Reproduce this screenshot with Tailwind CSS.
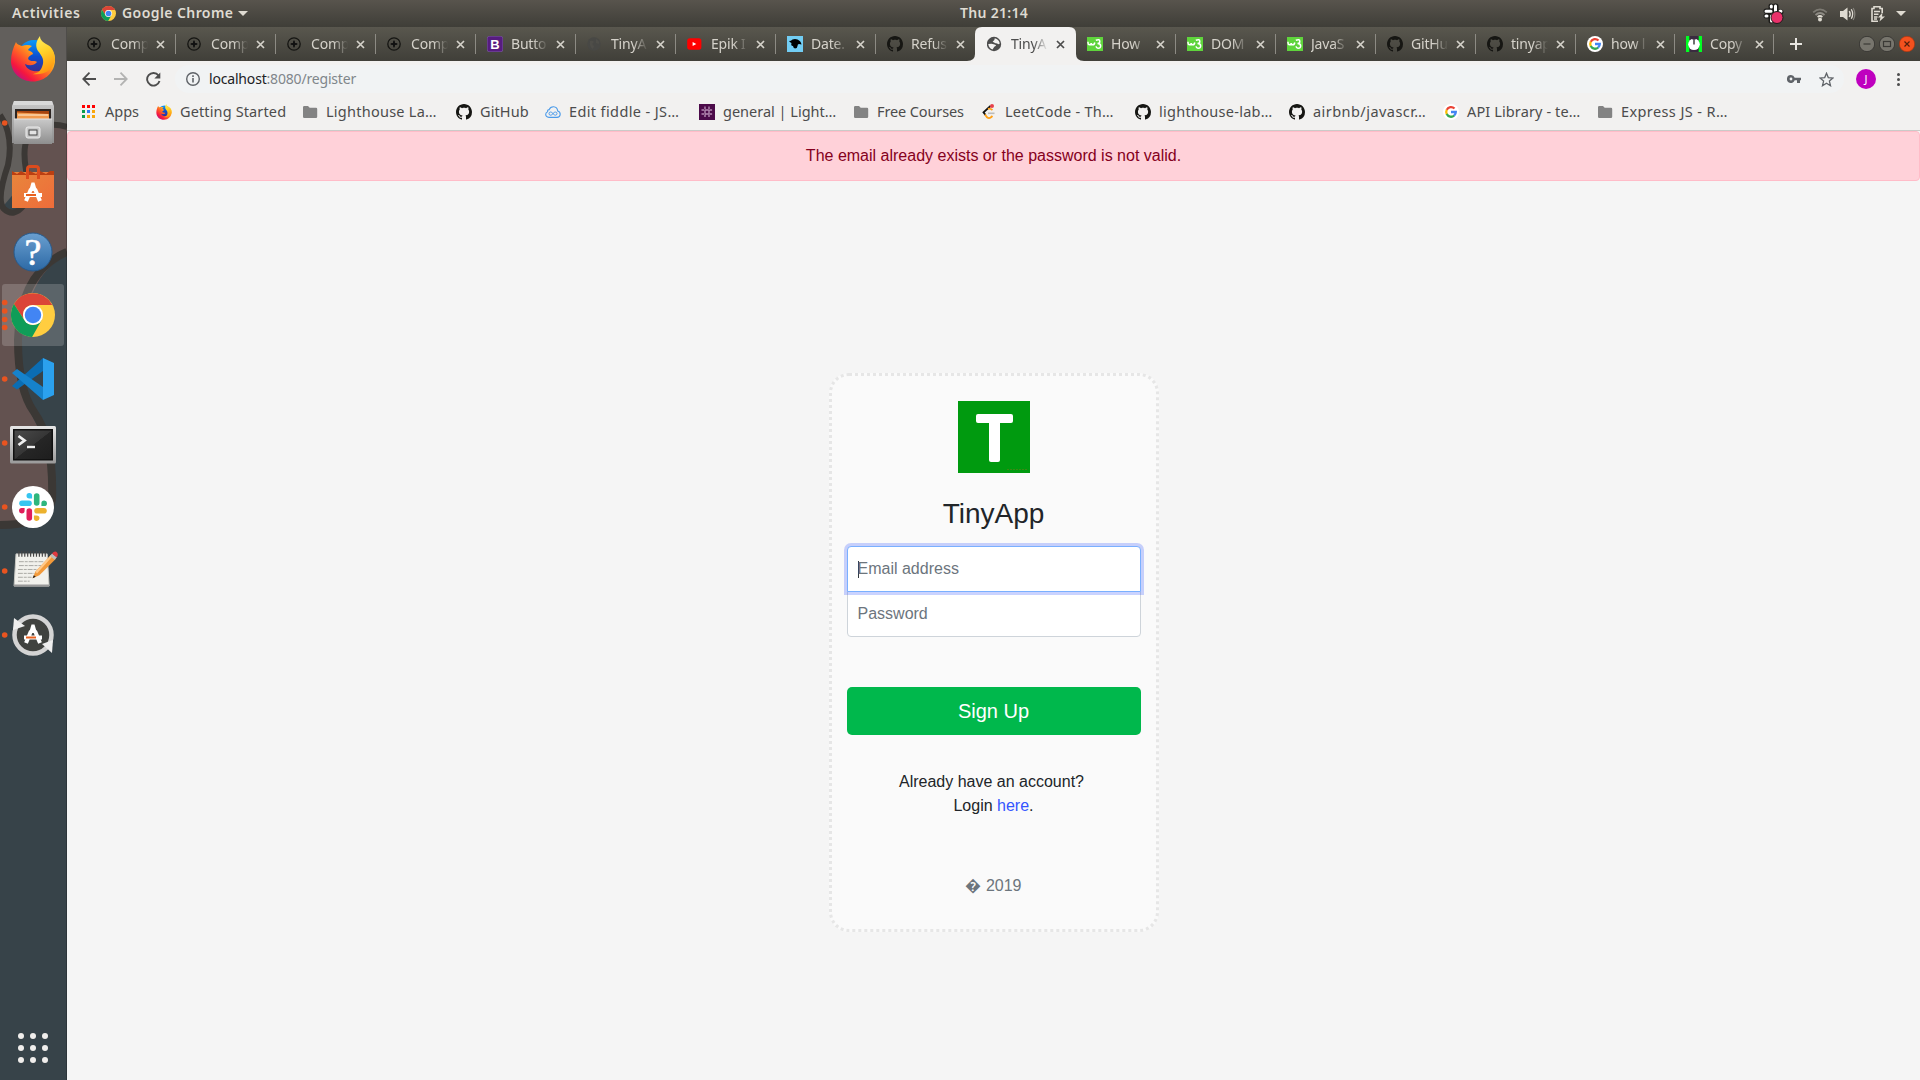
<!DOCTYPE html>
<html lang="en">
<head>
<meta charset="utf-8">
<title>TinyApp</title>
<script src="https://cdn.jsdelivr.net/npm/@tailwindcss/browser@4"></script>
</head>
<body class="w-[1920px] h-[1080px] overflow-hidden flex flex-col bg-[#f5f5f5] font-['Noto_Sans',sans-serif]">

<!-- shared icon definitions -->
<svg class="absolute w-0 h-0">
  <defs>
    <linearGradient id="ffBody" x1="0.85" y1="0.1" x2="0.1" y2="0.9"><stop offset="0" stop-color="#fff44f"/><stop offset=".3" stop-color="#ffa51e"/><stop offset=".55" stop-color="#ff5a28"/><stop offset=".8" stop-color="#f5173f"/><stop offset="1" stop-color="#b5108c"/></linearGradient>
    <linearGradient id="ffTail" x1="0" y1="0" x2="0.3" y2="1"><stop offset="0" stop-color="#fff36b"/><stop offset=".5" stop-color="#ffd32a"/><stop offset="1" stop-color="#ff9a12"/></linearGradient>
    <linearGradient id="ffGlobe" x1="0.5" y1="0" x2="0.5" y2="1"><stop offset="0" stop-color="#0a9bfa"/><stop offset=".5" stop-color="#0b4fd0"/><stop offset="1" stop-color="#3c2a8c"/></linearGradient>
    <linearGradient id="steel" x1="0" y1="0" x2="0" y2="1"><stop offset="0" stop-color="#c9c9c9"/><stop offset="1" stop-color="#8e8e8e"/></linearGradient>
    <linearGradient id="bag" x1="0" y1="0" x2="1" y2="1"><stop offset="0" stop-color="#e8863c"/><stop offset="1" stop-color="#ef6c3a"/></linearGradient>
    <linearGradient id="help" x1="0" y1="0" x2="0" y2="1"><stop offset="0" stop-color="#6a9fd0"/><stop offset="1" stop-color="#2c69a5"/></linearGradient>
    <linearGradient id="termFrame" x1="0" y1="0" x2="0" y2="1"><stop offset="0" stop-color="#e6e6e6"/><stop offset="1" stop-color="#9a9a9a"/></linearGradient>
    <linearGradient id="screen" x1="0" y1="0" x2="1" y2="1"><stop offset="0" stop-color="#4a4a4a"/><stop offset=".5" stop-color="#363636"/><stop offset=".51" stop-color="#262626"/><stop offset="1" stop-color="#1e1e1e"/></linearGradient>

    <symbol id="firefox" viewBox="0 0 44 46">
      <circle cx="23" cy="20.500" r="16.500" fill="url(#ffGlobe)"/>
      <path d="M5 6C2 12 0 18 0 25C0 37 10 45.500 22 45.500S44 36 44 24C44 20 43 17 41 14C42 22 38 33 29 35C22 36.500 15 33 14 28C18 30 23 30 26 26C24 24 21 26 18 24C16 22 18 20 22 18C22 16 19 15 17 14C18 12 20 11 21 10C18 8.500 14 8.500 11 10C9 9 6 9 5 6Z" fill="url(#ffBody)"/>
      <path d="M29 0C25 5 24 10 27 15C31 20 34 24 31 31C29 36 25 38 21 38C33 40 43 33 44 24C44 15 40 10 35 8C32 6 29 4 29 0Z" fill="url(#ffTail)"/>
    </symbol>
    <symbol id="chrome" viewBox="0 0 48 48">
      <circle cx="24" cy="24" r="24" fill="#ffcd40"/>
      <path d="M3.200 12A24 24 0 0 1 45 13H24A11 11 0 0 0 14.500 29.500Z" fill="#db4437"/>
      <path d="M3.200 12L14.500 29.500A11 11 0 0 0 33.500 29.500L23 48A24 24 0 0 1 3.200 12Z" fill="#0f9d58"/>
      <circle cx="24" cy="24" r="11" fill="#fff"/><circle cx="24" cy="24" r="9" fill="#4285f4"/>
    </symbol>
    <symbol id="github" viewBox="0 0 16 16"><path fill-rule="evenodd" d="M8 0C3.580 0 0 3.580 0 8c0 3.540 2.290 6.530 5.470 7.590.4.070.55-.17.55-.38 0-.19-.01-.82-.01-1.490-2.010.37-2.530-.49-2.690-.94-.09-.23-.48-.94-.82-1.130-.28-.15-.68-.52-.01-.53.63-.01 1.080.58 1.230.82.72 1.210 1.870.87 2.330.66.070-.52.28-.87.51-1.070-1.780-.2-3.640-.89-3.640-3.950 0-.87.31-1.590.82-2.150-.08-.2-.36-1.020.08-2.120 0 0 .67-.21 2.200.82.64-.18 1.320-.27 2-.27s1.360.09 2 .27c1.530-1.040 2.200-.82 2.200-.82.44 1.100.16 1.920.08 2.120.51.56.82 1.270.82 2.150 0 3.070-1.870 3.750-3.650 3.950.29.25.54.73.54 1.480 0 1.070-.01 1.930-.01 2.200 0 .21.15.46.55.38A8.010 8.010 0 0 0 16 8c0-4.420-3.580-8-8-8z"/></symbol>
    <symbol id="compass" viewBox="0 0 16 16"><circle cx="7" cy="8" r="6.200" fill="none" stroke="#151512" stroke-width="1.300"/><path d="M7 4.300L8.100 6.900L10.700 8L8.100 9.100L7 11.700L5.900 9.100L3.300 8L5.900 6.900Z" fill="#111"/><path d="M7 4.800V11.200M3.800 8H10.200" stroke="#111" stroke-width="1.300"/></symbol>
    <symbol id="bootstrap" viewBox="0 0 16 16"><rect width="16" height="16" rx="2.500" fill="#7a5aa0"/><rect x=".5" y=".5" width="15" height="15" rx="2" fill="#571c80"/><text x="8" y="12.600" text-anchor="middle" font-family="Liberation Sans" font-weight="bold" font-size="13" fill="#fff">B</text></symbol>
    <symbol id="dimglobe" viewBox="0 0 16 16"><circle cx="7" cy="8" r="6.800" fill="#484845"/><path d="M3 5Q6 4 7 6Q4 8 7 10L6 13Q2 11 3 5ZM9 3Q13 5 12 8L9 7Z" fill="#4f4e49"/></symbol>
    <symbol id="globe" viewBox="0 0 16 16"><circle cx="7" cy="8" r="7.200" fill="#4d4d4d"/><path d="M1.300 8L4.500 7.800Q6.800 8.300 8.300 8.800L9.100 9.700Q7.300 10.300 6.800 11.500L5.600 13.500Q1.800 12.300 1.300 8ZM7.800 2.300Q11.800 3.300 12.800 7.500L11.300 8.300Q10.100 7 8.500 7.200L5.600 5.700Q7.800 5 7.800 2.300Z" fill="#f2f1f0"/></symbol>
    <symbol id="youtube" viewBox="0 0 16 16"><rect x=".2" y="2.300" width="14.200" height="11.400" rx="2.600" fill="#f00"/><path d="M5.600 6V10L9.300 8Z" fill="#fff"/></symbol>
    <symbol id="bird" viewBox="0 0 16 16"><rect width="16" height="16" fill="#72cdf4"/><path d="M2 5Q4 5 5.500 3.500Q8 2.600 10.500 3.500Q14 5 14.500 8.500L12 8Q10.500 8 10.500 10Q10.300 12.500 8 12.500Q6.300 12 6 10Q3.500 10 4.500 7Q3 6.500 2 5Z" fill="#000"/></symbol>
    <symbol id="w3" viewBox="0 0 16 16"><rect y="1" width="16" height="14" fill="#5fd43c"/><path d="M1 5.800V7Q1 8.800 2.600 8.800Q4.200 8.800 4.200 7Q4.200 8.800 5.800 8.800Q7.400 8.800 7.800 6.500M8.800 4.300Q12.800 2.800 12.800 5.400Q12.800 7.600 10.500 7.600Q13.700 7.600 13.700 10Q13.500 12.700 10.400 12Q9.200 11.600 9.100 10.300" fill="none" stroke="#fff" stroke-width="1.500"/></symbol>
    <symbol id="google" viewBox="0 0 16 16"><circle cx="8" cy="8" r="8" fill="#fff"/><g fill="none" stroke-width="2.300"><path d="M11.500 4.500A4.800 4.800 0 0 0 3.700 5.900" stroke="#ea4335"/><path d="M3.800 5.700A4.800 4.800 0 0 0 3.800 10.300" stroke="#fbbc05"/><path d="M3.700 10.100A4.800 4.800 0 0 0 11.200 11.500" stroke="#34a853"/><path d="M8 8H12.800A4.800 4.800 0 0 1 11.100 11.600" stroke="#4285f4"/></g></symbol>
    <symbol id="ccopy" viewBox="0 0 16 16"><rect width="16" height="16" fill="#0f2"/><rect x="3.300" width="9.400" height="16" fill="#3a2b40"/><circle cx="8" cy="8.300" r="5.800" fill="#fff"/><path d="M8 4V8.500" stroke="#222" stroke-width="1.300"/><path d="M5.500 3L8 4L10.500 3V1H5.500Z" fill="#3a2b40"/></symbol>
    <symbol id="apps" viewBox="0 0 16 16"><g fill="#f00"><path d="M1 1h3v3H1zM6 1h3v3H6zM11 1h3v3h-3z"/></g><path d="M1 6h3v3H1zM1 11h3v3H1z" fill="#0a9d4c"/><path d="M6 6h3v3H6z" fill="#2f7bf5"/><path d="M11 6h3v3h-3zM6 11h3v3H6zM11 11h3v3h-3z" fill="#f9a60a"/></symbol>
    <symbol id="folder" viewBox="0 0 16 16"><path d="M1 3.300Q1 2 2.200 2H6L7.700 3.700H14Q15.200 3.700 15.200 5V12.700Q15.200 14 14 14H2.200Q1 14 1 12.700Z" fill="#838383"/></symbol>
    <symbol id="fiddle" viewBox="0 0 16 16"><path d="M4 13.400Q.7 13.200.7 10.300Q.8 8.300 2.600 7.700Q2.300 5.700 4.200 5.600Q5.300 2.600 8.600 2.700Q12.300 3 12.700 7Q15.300 7.800 15.200 10.500Q14.900 13.300 12 13.400Z" fill="none" stroke="#4b9bea" stroke-width="1.100"/><path d="M8 9.600Q6.700 8 5.600 8Q4 8.100 4 9.600T5.600 11.200Q6.700 11.200 8 9.600Q9.300 8 10.400 8Q12 8.100 12 9.600T10.400 11.200Q9.300 11.200 8 9.600Z" fill="none" stroke="#4b9bea"/></symbol>
    <symbol id="slackbm" viewBox="0 0 16 16"><rect width="16" height="16" fill="#4c0b4a"/><path d="M6 2.500V13.500M10 2.500V13.500M2.500 6H13.500M2.500 10H13.500" stroke="#b48ab2" stroke-width="1.400" stroke-dasharray="2.500 .8 4 .8"/></symbol>
    <symbol id="leet" viewBox="0 0 16 16"><path d="M9.500 2L2.500 8.300L4.500 11" fill="none" stroke="#111" stroke-width="1.800"/><path d="M4 10.500L6 13.300Q8 15 10 13.300L11.500 12M7 4.800Q9 4 11.500 6" fill="none" stroke="#ffa116" stroke-width="1.800"/><path d="M7 9.300H13.500" stroke="#bbb" stroke-width="1.600"/><circle cx="11" cy="2" r="2" fill="#e8414a"/></symbol>
    <symbol id="slack" viewBox="0 0 28 28">
      <g stroke-width="5.600" stroke-linecap="round"><path d="M3 10.300H10" stroke="#36c5f0"/><path d="M17.700 3V10" stroke="#2eb67d"/><path d="M18 17.700H25" stroke="#ecb22e"/><path d="M10.300 18V25" stroke="#e01e5a"/></g>
      <path d="M13.100 5.600V2.900A2.800 2.800 0 1 0 10.300 5.600Z" fill="#36c5f0"/><path d="M22.400 13.100H25A2.800 2.800 0 1 0 22.400 10.300Z" fill="#2eb67d"/><path d="M14.900 22.400V25A2.800 2.800 0 1 0 17.700 22.400Z" fill="#ecb22e"/><path d="M5.600 14.900H3A2.800 2.800 0 1 0 5.600 17.700Z" fill="#e01e5a"/>
    </symbol>
  </defs>
</svg>

<!-- desktop top bar -->
<header class="h-[27px] shrink-0 flex items-center bg-linear-to-b from-[#58544d] to-[#3f3e38] text-[#dfdbd2] text-[14px] font-semibold leading-[25px]">
  <span class="w-[88px] h-[27px] pl-3 tracking-[0.6px]">Activities</span>
  <svg class="w-[15px] h-[15px] ml-[13px] mb-px"><use href="#chrome"/></svg>
  <span class="ml-1.5 w-[116px] h-[27px] whitespace-nowrap tracking-[0.42px]">Google Chrome</span>
  <svg class="w-[10px] h-[5px]" viewBox="0 0 10 5"><path d="M0 0H10L5 5Z" fill="#dfdbd2"/></svg>
  <span class="ml-[712px] w-[74px] h-[27px] whitespace-nowrap tracking-[0.3px]">Thu 21:14</span>
  <div class="ml-auto flex items-center pr-[14px]">
    <svg class="w-[22px] h-[22px] mr-[27px]" viewBox="0 0 22 22"><g stroke-linecap="round"><path d="M8 3V8M13 3V8M3 8H7M13 9H18M3 13H8M8 14V18M12 3V7" stroke="#1d1c1a" stroke-width="5"/><path d="M8.300 3V4M12.500 3V8M3 8.300H8M17 8.300H18M3 13H4M8.500 13V18M13 13H16" stroke="#fff" stroke-width="3"/></g><circle cx="14" cy="14.500" r="6" fill="#e9316a" stroke="#1d1c1a"/></svg>
    <svg class="w-4 h-4 mr-3" viewBox="0 0 16 16" fill="none" stroke-width="1.700"><path d="M1.200 6.300Q8 .3 14.800 6.300" stroke="#7d7a73"/><path d="M3.500 9Q8 5 12.500 9" stroke="#8f8c85"/><path d="M5.600 11Q8 9 10.400 11" stroke="#dfdbd2"/><circle cx="8" cy="13.400" r="2" fill="#dfdbd2"/></svg>
    <svg class="w-4 h-4 mr-[14px]" viewBox="0 0 16 16" fill="none"><path d="M0 5H3L7.500 1.500V14.500L3 11H0Z" fill="#dfdbd2"/><path d="M9.300 5Q11 8 9.300 11" stroke="#dfdbd2" stroke-width="1.500"/><path d="M11.300 3.300Q14 8 11.300 12.700" stroke="#dfdbd2" stroke-width="1.300"/><path d="M13.200 2Q16.500 8 13.200 14" stroke="#86837c" stroke-width="1.200"/></svg>
    <svg class="w-4 h-4 mr-[10px]" viewBox="0 0 16 16" fill="none" stroke="#dfdbd2"><path d="M8 15.200H2V2.500H4V.8H10V2.500H12.200V7" stroke-width="1.600"/><path d="M4 5.500H10M4 8.200H8.500M4 11H7.500M4 13H7" stroke-width="1.500"/><path d="M12.500 6.500L8 11.500H10.500L9.500 15.500L15 10.500H12Z" fill="#dfdbd2" stroke="none"/></svg>
    <svg class="w-[10px] h-[5px]" viewBox="0 0 10 5"><path d="M0 0H10L5 5Z" fill="#dfdbd2"/></svg>
  </div>
</header>

<div class="flex flex-1 min-h-0">
  <!-- launcher -->
  <aside class="relative w-[67px] h-[1053px] shrink-0 bg-[#374349] overflow-hidden">
    <svg class="absolute inset-0 w-[67px] h-[1053px]" viewBox="0 27 67 1053">
      <path d="M0 27H67V130L0 210Z" fill="#625f5c"/>
      <path d="M0 200Q10 222 25 200L24 145Q40 124 67 128V256Q30 270 21 340Q20 390 34 420Q52 450 50 500Q45 522 0 524Z" fill="#635250"/>
      <path d="M0 115Q14 135 8 165Q-4 200 4 209Q14 218 24 205Q33 190 26 170Q20 135 38 128Q52 122 67 127" fill="none" stroke="#3b3835" stroke-width="6"/>
      <path d="M67 252Q20 272 18 340Q18 390 34 412Q54 440 52 500Q46 525 0 525" fill="none" stroke="#3b3835" stroke-width="8"/>
      <path d="M66.500 27V1080" stroke="#000" stroke-opacity=".2"/>
    </svg>
    <nav class="relative flex flex-col h-full">
      <div class="h-16 flex items-center justify-center pr-px"><svg class="w-[44px] h-[46px]"><use href="#firefox"/></svg></div>
      <div class="h-16 flex items-center justify-center pr-px"><svg class="w-[42px] h-11" viewBox="0 0 42 44"><path d="M2 0H40L42 5V42H0V5Z" fill="url(#steel)"/><path d="M2 0H40L41 4H1Z" fill="#d9d9d9"/><path d="M3 8H39V18H3Z" fill="#2c2522"/><path d="M5 10H37V18H5Z" fill="#a8440e"/><path d="M5 11.500L37 13V18H5Z" fill="#f19a4e"/><path d="M6 14H36" stroke="#fff0d8"/><path d="M2 18H40V43H2Z" fill="url(#steel)"/><path d="M2 18H40" stroke="#e2e2e2"/><rect x="14" y="26" width="14" height="11" rx="2" fill="#c9c9c9" stroke="#ececec"/><rect x="17" y="29" width="8" height="5" fill="#e3e3e3" stroke="#444"/></svg></div>
      <div class="h-16 flex items-center justify-center pr-px"><svg class="w-[42px] h-[44px]" viewBox="0 0 42 44"><path d="M0 7H42V43H0Z" fill="url(#bag)"/><path d="M0 6L5 9L9 6L14 9L18 6L24 9L28 6L34 9L38 6L42 6V10H0Z" fill="#bb3f12"/><path d="M15.500 14V4Q15.500 1.500 18 1.500H24Q26.500 1.500 26.500 4V14" fill="none" stroke="#dc4b1d" stroke-width="3"/><path d="M14 36L19 24M28 36L23 24M12 30H30" fill="none" stroke="#fff" stroke-width="4"/><path d="M17 26L19.500 17.500H22.500L25 26Z" fill="#fff"/><path d="M14 30H24" stroke="#e8601f" stroke-width="2"/></svg></div>
      <div class="h-16 flex items-center justify-center pr-px pt-0.5"><svg class="w-10 h-10" viewBox="0 0 40 40"><circle cx="20" cy="20" r="19" fill="url(#help)" stroke="#275a8c"/><text x="20" y="32.500" text-anchor="middle" font-family="Liberation Serif" font-size="38" fill="#fff" stroke="#fff" stroke-width=".6">?</text></svg></div>
      <div class="h-16 flex items-center justify-center pr-px"><div class="w-[62px] h-[62px] rounded-[3px] bg-white/18 flex items-center justify-center"><svg class="w-11 h-11"><use href="#chrome"/></svg></div></div>
      <div class="h-16 flex items-center justify-center pr-px"><svg class="w-[42px] h-[42px]" viewBox="0 0 42 42"><path d="M0 28L31 0V13L5 31.500Z" fill="#0b6db3"/><path d="M0 15L5 11L31 29V42Z" fill="#1682cb"/><path d="M31 0L42 5V37L31 42Z" fill="#2ba1ee"/></svg></div>
      <div class="h-16 flex items-center justify-center pr-px pt-1"><svg class="w-[46px] h-[38px]" viewBox="0 0 46 38"><rect width="46" height="37.500" rx="1.500" fill="url(#termFrame)"/><rect x="3" y="3" width="40" height="31.500" fill="#111"/><rect x="4.500" y="4.500" width="37" height="28.500" fill="url(#screen)"/><path d="M8.500 10L14.500 14.500L8.500 19" fill="none" stroke="#eee" stroke-width="2.800"/><path d="M17 21H25" stroke="#eee" stroke-width="2.400"/></svg></div>
      <div class="h-16 flex items-center justify-center pr-px"><div class="w-[42px] h-[42px] rounded-full bg-white flex items-center justify-center"><svg class="w-7 h-7"><use href="#slack"/></svg></div></div>
      <div class="h-16 flex items-center justify-center pl-[3px] pb-[5px]"><svg class="w-[45px] h-[39px]" viewBox="0 0 46 40"><path d="M3 5H35L37 38H1Z" fill="#f1f1ec" stroke="#c9c9c3"/><path d="M1 37.500H37" stroke="#999" stroke-width="2"/><path d="M6 13H32M6 17H30M5 21H28M5 25H22M5 29H19M5 33H17" stroke="#a9a9a4" stroke-dasharray="5 1 3 1"/><path d="M6 2V8M9 2V8M12 2V8M15 2V8M18 2V8M21 2V8M24 2V8M27 2V8M30 2V8M33 2V8" stroke="#444" stroke-width="1.200"/><path d="M20 30L23 23L39 6L44 10L27 27Z" fill="#f29a3a"/><path d="M23 23L39 6L40.500 7.500L24.500 25Z" fill="#ffc98a"/><path d="M38 7L40 4.500L45 8.500L42.500 11Z" fill="#bdbdbd"/><path d="M40 4.500Q43 1 45.500 4Q46.500 7 44.500 8.500Z" fill="#e2393f"/><path d="M20 30L21.300 26.800L23.300 28.500Z" fill="#222"/></svg></div>
      <div class="h-16 flex items-center justify-center pr-px"><svg class="w-[42px] h-[42px]" viewBox="0 0 42 42"><circle cx="21" cy="21" r="18.500" fill="#40423f" stroke="#d4d4d4" stroke-width="4.500"/><path d="M2 4L13 12L1 16Z" fill="#eee"/><path d="M41 26L30 30L40 39Z" fill="#eee"/><path d="M14 29L19 17M28 29L23 17M12 23.500H30" fill="none" stroke="#fff" stroke-width="4"/><path d="M17 19L19.500 10.500H22.500L25 19Z" fill="#fff"/><path d="M14 23.500H24" stroke="#e8601f" stroke-width="2"/></svg></div>
      <div class="mt-auto h-16 flex items-center justify-center pr-px"><svg class="w-[30px] h-[30px]" viewBox="0 0 30 30" fill="#f0eeec"><circle cx="3" cy="3" r="3"/><circle cx="15" cy="3" r="3"/><circle cx="27" cy="3" r="3"/><circle cx="3" cy="15" r="3"/><circle cx="15" cy="15" r="3"/><circle cx="27" cy="15" r="3"/><circle cx="3" cy="27" r="3"/><circle cx="15" cy="27" r="3"/><circle cx="27" cy="27" r="3"/></svg></div>
    </nav>
    <!-- running-window markers -->
    <svg class="absolute inset-0 w-[67px] h-[1053px]" viewBox="0 27 67 1053" fill="#e95420"><circle cx="4.700" cy="123" r="2.800"/><circle cx="4.700" cy="302.500" r="2.800"/><circle cx="4.700" cy="311" r="2.800"/><circle cx="4.700" cy="319.500" r="2.800"/><circle cx="4.700" cy="327.500" r="2.800"/><circle cx="4.700" cy="379" r="2.800"/><circle cx="4.700" cy="443" r="2.800"/><circle cx="4.700" cy="507" r="2.800"/><circle cx="4.700" cy="571" r="2.800"/><circle cx="4.700" cy="635" r="2.800"/></svg>
  </aside>

  <section class="flex flex-col flex-1 min-w-0">
    <!-- tab strip -->
    <div class="h-[34px] shrink-0 flex bg-linear-to-b from-[#59574e] to-[#403f39] pl-[9px]">
      <div id="tabs" class="flex"></div>
      <svg class="w-3 h-3 mt-[11px] ml-4" viewBox="0 0 12 12"><path d="M6 0V12M0 6H12" stroke="#e8e6e1" stroke-width="2"/></svg>
      <div class="ml-auto mr-[5px] mt-[9px] flex gap-1">
        <svg class="w-4 h-4" viewBox="0 0 16 16"><circle cx="8" cy="8" r="7.700" fill="#77756d" stroke="#3a3935"/><path d="M4.500 8H11.500" stroke="#3a3935" stroke-width="1.200"/></svg>
        <svg class="w-4 h-4" viewBox="0 0 16 16"><circle cx="8" cy="8" r="7.700" fill="#77756d" stroke="#3a3935"/><rect x="4.500" y="5.500" width="7" height="5" fill="none" stroke="#3a3935" stroke-width="1.200"/></svg>
        <svg class="w-4 h-4" viewBox="0 0 16 16"><circle cx="8" cy="8" r="7.700" fill="#f4511e" stroke="#a8330c" stroke-width=".6"/><path d="M5.500 5.500L10.500 10.500M10.500 5.500L5.500 10.500" stroke="#54200c" stroke-width="1.200"/></svg>
      </div>
    </div>

    <!-- toolbar -->
    <div class="h-[36px] shrink-0 flex items-center bg-[#f2f1f0] pl-[15px]">
      <svg class="w-[14px] h-[14px]" viewBox="0 0 14 14" fill="none" stroke="#4d4d4d" stroke-width="1.800"><path d="M14 7H1.500M7.500 .7L1.300 7L7.500 13.300"/></svg>
      <svg class="w-[14px] h-[14px] ml-[18px]" viewBox="0 0 14 14" fill="none" stroke="#b3b3b2" stroke-width="1.800"><path d="M0 7H12.500M6.500 .7L12.700 7L6.500 13.300"/></svg>
      <svg class="w-[15px] h-[15px] ml-[18px]" viewBox="0 0 15 15" fill="none"><path d="M12.500 3.500A6.300 6.300 0 1 0 13.500 9" stroke="#4d4d4d" stroke-width="1.900"/><path d="M14.300 .5V6.500H8.300Z" fill="#4d4d4d"/></svg>
      <div class="ml-[14px] w-[1669px] h-7 rounded-full bg-[#f1f3f4] flex items-center pl-[11px] pr-[10px]">
        <svg class="w-[14px] h-[14px]" viewBox="0 0 14 14" fill="none" stroke="#5f6368"><circle cx="7" cy="7" r="6.300" stroke-width="1.400"/><path d="M7 6V10.500M7 3.300V4.900" stroke-width="1.600"/></svg>
        <span class="ml-[9px] mb-0.5 text-[14px] tracking-[-0.18px] text-[#202124] whitespace-nowrap">localhost<span class="text-[#80868b]">:8080/register</span></span>
        <svg class="w-[14px] h-2 ml-auto mb-px" viewBox="0 0 14 8"><path fill-rule="evenodd" d="M4 0A4 4 0 1 0 7.700 5.300H10V8H13V5.300H14V2.700H7.700A4 4 0 0 0 4 0ZM4 2.600A1.400 1.400 0 1 1 4 5.400A1.400 1.400 0 0 1 4 2.600Z" fill="#5f6368"/></svg>
        <svg class="w-[15px] h-[15px] ml-[18px]" viewBox="0 0 15 15"><path d="M7.500 1.300L9.300 5.600L14 6L10.400 9.100L11.500 13.700L7.500 11.200L3.500 13.700L4.600 9.100L1 6L5.700 5.600Z" fill="none" stroke="#5f6368" stroke-width="1.300"/></svg>
      </div>
      <div class="ml-3 w-5 h-5 rounded-full bg-[#bf00bf] text-white text-[11px] leading-5 text-center">J</div>
      <svg class="w-[3px] h-[13px] ml-[21px]" viewBox="0 0 3 13" fill="#4d4d4d"><circle cx="1.500" cy="1.500" r="1.500"/><circle cx="1.500" cy="6.500" r="1.500"/><circle cx="1.500" cy="11.500" r="1.500"/></svg>
    </div>

    <!-- bookmarks -->
    <div id="bookmarks" class="h-[34px] shrink-0 flex items-center bg-[#f2f1f0] border-b border-[#cbcac8] pl-[14px] pb-[3px] text-[14.5px] text-[#4c4c4c] whitespace-nowrap"></div>

    <!-- page -->
    <main class="flex-1 flex flex-col items-center bg-[#f5f5f5] font-['Liberation_Sans',Arial,sans-serif] text-[16px] leading-6 text-[#212529]">
      <div class="w-full h-[50px] rounded-[4px] border border-[#ffbcc8] bg-[#ffd1d9] text-[#850020] text-center leading-[48px]">The email already exists or the password is not valid.</div>
      <form class="mt-[192px] w-[330px] h-[559px] rounded-[20px] border-[3px] border-dotted border-[#e6e6e6] bg-[#fafafa] px-[15px] pt-[25px] flex flex-col items-center text-center">
        <svg class="w-[72px] h-[72px]" viewBox="0 0 72 72"><rect width="72" height="72" fill="#009a0f"/><rect x="18" y="13" width="37" height="9" rx="2" fill="#fff"/><rect x="31" y="13" width="11" height="48" rx="2" fill="#fff"/><path d="M49 68.500H70" stroke="#3a8a12" stroke-dasharray="2 1"/></svg>
        <h1 class="mt-6 text-[28px] leading-[34px]">TinyApp</h1>
        <div class="relative z-10 mt-[15px] w-[294px] h-[46px] rounded-t-[4px] border border-[#7ab0ff] bg-white shadow-[0_0_0_3px_rgba(51,85,255,0.26)] px-[10px] flex items-center text-[#6c757d]"><span class="w-px h-[17px] bg-[#343a40]"></span><span class="-ml-px">Email address</span></div>
        <div class="-mt-px w-[294px] h-[46px] rounded-b-[4px] border border-[#ced4da] bg-white px-[10px] flex items-center text-[#6c757d]">Password</div>
        <div class="mt-[50px] w-[294px] h-12 rounded-[5px] bg-[#00b84c] text-white text-[20px] leading-[48px]">Sign Up</div>
        <p class="mt-[35px] whitespace-nowrap"><span class="pr-1">Already have an account?</span><br>Login <a class="text-[#3355ff]">here</a>.</p>
        <p class="mt-14 text-[#6c757d]">&#xFFFD; 2019</p>
      </form>
    </main>
  </section>
</div>

<script>
const tabs = [
  ['compass', 'Comp'], ['compass', 'Comp'], ['compass', 'Comp'], ['compass', 'Comp'],
  ['bootstrap', 'Butto'], ['dimglobe', 'TinyA'], ['youtube', 'Epik I'], ['bird', 'Date.'],
  ['github', 'Refus'], ['globe', 'TinyA'], ['w3', 'How'], ['w3', 'DOM'],
  ['w3', 'JavaS'], ['github', 'GitHu'], ['github', 'tinyap'], ['google', 'how l'], ['ccopy', 'Copy']
];
const active = 9;
document.getElementById('tabs').innerHTML = tabs.map(([icon, title], i) => {
  const on = i === active;
  const width = i > 14 ? 'w-[99px]' : 'w-[100px]';
  const sep = on || i === active - 1 ? '' : '<i class="absolute right-0 top-[7px] h-5 w-px bg-[#8d8b84]"></i>';
  const shape = on ? '<svg class="absolute -left-[9px] top-0 w-[118px] h-[34px]" viewBox="0 0 118 34"><path d="M0 34Q8 34 8 27V7Q8 0 15 0H102Q109 0 109 7V27Q109 34 117 34Z" fill="#f2f1f0"/></svg>' : '';
  return `<div class="relative ${width} h-[34px] flex items-center pl-[11px] ${on ? 'text-[#4c4c4c]' : 'text-[#d5d2ca]'}">${shape}
    <svg class="relative w-4 h-4 shrink-0 fill-[#161613]"><use href="#${icon}"/></svg>
    <span class="relative ml-2 w-[37px] whitespace-nowrap text-[14px] leading-5 tracking-[-0.2px] [mask-image:linear-gradient(to_right,#000_60%,transparent)]">${title}</span>
    <svg class="relative ml-2 w-[9px] h-[9px]" viewBox="0 0 9 9"><path d="M1 1L8 8M8 1L1 8" stroke="currentColor" stroke-width="1.700"/></svg>${sep}</div>`;
}).join('');

// icon, label, slot width, letter spacing
const bookmarks = [
  ['apps', 'Apps', 75, 0], ['firefox', 'Getting Started', 146, .13], ['folder', 'Lighthouse La…', 154, .25], ['github', 'GitHub', 89, .1],
  ['fiddle', 'Edit fiddle - JS…', 154, .38], ['slackbm', 'general | Light…', 154, 0], ['folder', 'Free Courses', 128, -.12], ['leet', 'LeetCode - Th…', 154, .27],
  ['github', 'lighthouse-lab…', 154, .28], ['github', 'airbnb/javascr…', 154, .45], ['google', 'API Library - te…', 154, .12], ['folder', 'Express JS - R…', 154, .4]
];
document.getElementById('bookmarks').innerHTML = bookmarks.map(([icon, label, w, ls]) =>
  `<div class="shrink-0 flex items-center gap-2" style="width:${w}px"><svg class="w-4 h-4 shrink-0 fill-[#161613]"><use href="#${icon}"/></svg><span style="letter-spacing:${ls}px">${label}</span></div>`
).join('');
</script>
</body>
</html>
